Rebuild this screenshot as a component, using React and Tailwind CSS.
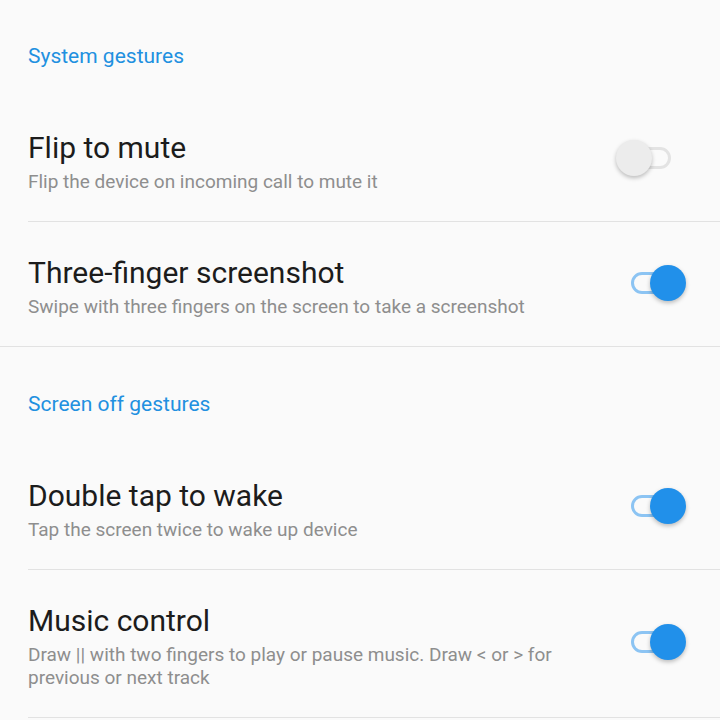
const sections = [
  {
    title: "System gestures",
    items: [
      { title: "Flip to mute", desc: "Flip the device on incoming call to mute it", on: false },
      { title: "Three-finger screenshot", desc: "Swipe with three fingers on the screen to take a screenshot", on: true },
    ],
    fullLast: true,
  },
  {
    title: "Screen off gestures",
    items: [
      { title: "Double tap to wake", desc: "Tap the screen twice to wake up device", on: true },
      {
        title: "Music control",
        desc: "Draw || with two fingers to play or pause music. Draw < or > for previous or next track",
        on: true,
      },
    ],
    fullLast: false,
  },
];

function Toggle({ on }) {
  return (
    <div className="relative w-[70px] h-[36px] shrink-0 flex items-center -translate-y-1">
      {/* track */}
      <div
        className={`absolute left-[15px] w-[40px] h-[22px] rounded-full border-[3px] ${
          on ? "border-[#8cc4f3]" : "border-[#e3e3e3]"
        }`}
      />
      {/* thumb */}
      <div
        className={`absolute top-0 w-[36px] h-[36px] rounded-full shadow-[0_2px_4px_rgba(0,0,0,0.25)] ${
          on ? "right-0 bg-[#2190ea]" : "left-0 bg-[#ececec]"
        }`}
      />
    </div>
  );
}

function Row({ item, full }) {
  return (
    <div className="relative">
      <div className="flex items-center pl-[28px] pr-[34px] pt-[33px] pb-[28px]">
        <div className="flex-1 pr-[16px]">
          <div className="text-[30px] leading-[36px] text-[#1c1c1c]">{item.title}</div>
          <div className="mt-1 text-[19px] leading-[23px] text-[#8e8e8e]">{item.desc}</div>
        </div>
        <Toggle on={item.on} />
      </div>
      <div className={`h-px bg-[#e2e2e2] ${full ? "ml-0" : "ml-[28px]"}`} />
    </div>
  );
}

export default function App() {
  return (
    <div className="w-[720px] h-[720px] overflow-hidden bg-[#fafafa] font-['Roboto',sans-serif]">
      {sections.map((s, si) => (
        <div key={s.title}>
          <div
            className={`pl-[28px] pb-[27px] text-[21px] leading-[28px] text-[#2190e0] ${
              si === 0 ? "pt-[42px]" : "pt-[43px]"
            }`}
          >
            {s.title}
          </div>
          {s.items.map((it, i) => (
            <Row key={it.title} item={it} full={s.fullLast && i === s.items.length - 1} />
          ))}
        </div>
      ))}
    </div>
  );
}
